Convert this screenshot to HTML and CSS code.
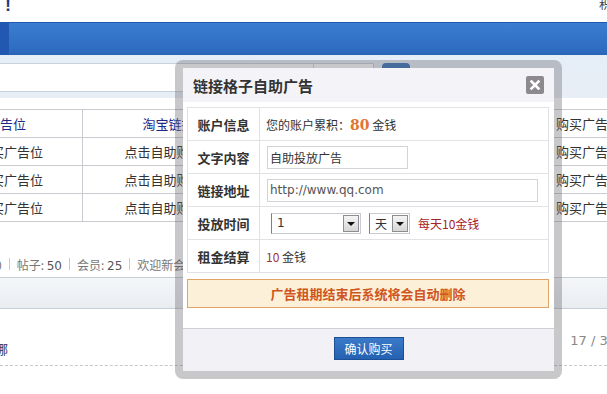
FILE: index.html
```html
<!DOCTYPE html>
<html lang="zh-CN">
<head>
  <meta charset="UTF-8">
  <title>链接格子自助广告</title>
  <link rel="stylesheet" href="styles.css">
</head>
<body>
  <div class="topbar">
    <span class="logo">!</span>
    <span class="top-link">积分</span>
  </div>
  <div class="nav"><div class="nav-home"></div></div>

  <div class="search-wrap">
    <div class="search-box">
      <div class="search-input"></div>
      <div class="search-type"></div>
    </div>
    <div class="search-btn"></div>
  </div>

  <table class="ad-table">
    <tr class="ad-head">
      <td class="c1"><a href="#">告位</a></td>
      <td class="c2"><a href="#">淘宝链接</a></td>
      <td class="c3"></td>
      <td class="c4">购买广告位</td>
    </tr>
    <tr>
      <td class="c1">购买广告位</td>
      <td class="c2">点击自助购买</td>
      <td class="c3"></td>
      <td class="c4">购买广告位</td>
    </tr>
    <tr>
      <td class="c1">购买广告位</td>
      <td class="c2">点击自助购买</td>
      <td class="c3"></td>
      <td class="c4">购买广告位</td>
    </tr>
    <tr>
      <td class="c1">购买广告位</td>
      <td class="c2">点击自助购买</td>
      <td class="c3"></td>
      <td class="c4">购买广告位</td>
    </tr>
  </table>

  <div class="stats">
    <span>0</span><i class="sep"></i>
    <span>帖子: <em>50</em></span><i class="sep"></i>
    <span>会员: <em>25</em></span><i class="sep"></i>
    <span>欢迎新会员</span>
  </div>

  <div class="grey-band"></div>

  <div class="thread-row">
    <a href="#" class="thread-link">哪</a>
    <span class="pages">17 / 33</span>
  </div>

  <!-- 自助广告弹窗 -->
  <div class="dialog">
    <div class="dialog-inner">
      <div class="dialog-title">
        <h3>链接格子自助广告</h3>
        <span class="close">
          <svg width="18" height="18" viewBox="0 0 18 18">
            <path d="M5.5 5.5 L12.5 12.5 M12.5 5.5 L5.5 12.5" stroke="#fff" stroke-width="2.6" stroke-linecap="square"/>
          </svg>
        </span>
      </div>

      <div class="dialog-body">
        <table class="form-table">
          <tr>
            <th>账户信息</th>
            <td class="pad6">您的账户累积：<b class="money">80</b> 金钱</td>
          </tr>
          <tr>
            <th>文字内容</th>
            <td><input type="text" class="text-short" value="自助投放广告"></td>
          </tr>
          <tr>
            <th>链接地址</th>
            <td><input type="text" class="text-long" value="http://www.qq.com"></td>
          </tr>
          <tr>
            <th>投放时间</th>
            <td>
              <div class="time-row">
                <div class="fake-select s-num">1<span class="arrow"></span></div>
                <div class="fake-select s-unit">天<span class="arrow"></span></div>
                <span class="rate">每天10金钱</span>
              </div>
            </td>
          </tr>
          <tr>
            <th>租金结算</th>
            <td class="pad6"><span class="price">10</span> 金钱</td>
          </tr>
        </table>
        <div class="notice">广告租期结束后系统将会自动删除</div>
      </div>

      <div class="dialog-foot">
        <button type="button" class="confirm">确认购买</button>
      </div>
    </div>
  </div>
</body>
</html>
```

FILE: styles.css
```css
html, body {
  margin: 0;
  width: 607px;
  height: 394px;
  overflow: hidden;
}

body {
  position: relative;
  background: #fff;
  font-family: "Noto Sans CJK SC", sans-serif;
  font-size: 12px;
  color: #333;
}

a {
  text-decoration: none;
}

/* top */
.topbar {
  height: 22px;
  display: flex;
  justify-content: space-between;
  align-items: flex-start;
}

.logo {
  margin: -4px 0 0 5px;
  font-family: "Liberation Sans", sans-serif;
  font-size: 18px;
  font-weight: bold;
  line-height: 18px;
  color: #1b3d86;
}

.top-link {
  margin: -3px -16px 0 0;
  font-size: 12px;
  line-height: 14px;
  color: #444;
}

.nav {
  height: 32px;
  border-top: 1px solid #2059a8;
  background: linear-gradient(#3b7dd0, #2e6cc1 85%, #2a63b3);
}

.nav-home {
  width: 9px;
  height: 100%;
  background: #2257b2;
}

.search-wrap {
  display: flex;
  align-items: flex-start;
  gap: 8px;
  height: 43px;
  padding-top: 8px;
  background: linear-gradient(#e5eef8, #e8eef5);
  box-sizing: border-box;
}

.search-box {
  display: flex;
  height: 29px;
  margin-left: -2px;
  background: #fff;
  border: 1px solid #c8d1db;
  box-sizing: border-box;
}

.search-input {
  width: 314px;
  border-right: 1px solid #d3d9e0;
}

.search-type {
  width: 59px;
}

.search-btn {
  width: 28px;
  height: 26px;
  border-radius: 4px;
  background: linear-gradient(#3a77bd, #2a62a8);
}

/* background table */
.ad-table {
  margin: 11px 0 0 -22px;
  border-collapse: collapse;
  table-layout: fixed;
  width: 692px;
  font-size: 13px;
}

.ad-table td {
  height: 28px;
  padding: 0;
  border-top: 1px solid #c9c9cf;
  border-bottom: 1px solid #c9c9cf;
  white-space: nowrap;
  overflow: hidden;
  color: #333;
  box-sizing: border-box;
}

.ad-table .c1 { width: 104px; border-right: 1px solid #c9c9cf; }
.ad-table .c2 { width: 178px; padding-left: 42px; }
.ad-table .c3 { width: 286px; }
.ad-table .c4 { width: 124px; padding-left: 10px; }

.ad-head .c1 { padding-left: 22px; }
.ad-head .c2 { padding-left: 60px; }

.ad-head a {
  color: #1f2a85;
}

.stats {
  display: flex;
  align-items: center;
  height: 18px;
  margin: 33px 0 0 -5px;
  color: #777;
  font-size: 12px;
}

.stats em {
  font-style: normal;
  font-family: "DejaVu Sans", sans-serif;
  color: #555;
}

.sep {
  width: 1px;
  height: 12px;
  margin: 0 7px;
  background: #ccc;
}

.grey-band {
  height: 30px;
  margin-top: 4px;
  border-top: 1px solid #c7cdd5;
  border-bottom: 1px solid #c7cdd5;
  background: linear-gradient(#f4f6f9, #e9edf2);
}

.thread-row {
  display: flex;
  justify-content: space-between;
  height: 56px;
  border-bottom: 1px dashed #c8c8c8;
}

.thread-link {
  margin: 30px 0 0 -5px;
  font-size: 13px;
  color: #2b3b66;
}

.pages {
  margin: 24px -9px 0 0;
  font-family: "DejaVu Sans", sans-serif;
  font-size: 13px;
  color: #888;
}

/* dialog */
.dialog {
  position: absolute;
  left: 175px;
  top: 60px;
  width: 387px;
  padding: 8px;
  border-radius: 8px;
  background: rgba(95, 90, 100, 0.34);
  box-sizing: border-box;
}

.dialog-inner {
  background: #fff;
}

.dialog-title {
  display: flex;
  justify-content: space-between;
  align-items: center;
  height: 34px;
  padding: 0 10px;
  background: #f4f3f7;
}

.dialog-title h3 {
  margin: 0;
  font-size: 15px;
  font-weight: bold;
  color: #333;
}

.close {
  display: flex;
  width: 18px;
  height: 18px;
  border-radius: 2px;
  background: #8c8a8f;
}

.dialog-body {
  height: 226px;
  padding: 5px 5px 0 4px;
  box-sizing: border-box;
}

.form-table {
  width: 100%;
  border-collapse: collapse;
  font-size: 12px;
}

.form-table th,
.form-table td {
  height: 32px;
  padding: 0;
  border: 1px solid #e2e2e6;
}

.form-table th {
  width: 71px;
  font-size: 13px;
  font-weight: bold;
  color: #333;
}

.form-table td {
  padding-left: 7px;
}

.form-table td.pad6 {
  padding-left: 6px;
}

.money {
  font-family: "DejaVu Serif", serif;
  font-size: 14px;
  color: #e07532;
}

.form-table input {
  height: 23px;
  padding: 0 2px;
  border: 1px solid #d4d4d8;
  font-family: "Noto Sans CJK SC", sans-serif;
  font-size: 12px;
  color: #333;
  box-sizing: border-box;
  outline: none;
}

.text-short {
  width: 141px;
}

.text-long {
  width: 271px;
  font-family: "DejaVu Sans", sans-serif !important;
  color: #555 !important;
}

.time-row {
  display: flex;
  align-items: center;
  margin-left: 4px;
}

.fake-select {
  display: flex;
  justify-content: space-between;
  align-items: center;
  height: 21px;
  padding-left: 5px;
  border: 1px solid #c6cbd1;
  border-left-color: #7f7f7f;
  font-family: "DejaVu Sans", sans-serif;
  font-size: 12px;
  color: #333;
  box-sizing: border-box;
}

.s-num {
  width: 90px;
}

.s-unit {
  width: 41px;
  margin-left: 8px;
  font-family: "Noto Sans CJK SC", sans-serif;
}

.arrow {
  position: relative;
  width: 16px;
  height: 17px;
  margin-right: 1px;
  border: 1px solid #8e8e8e;
  background: linear-gradient(#f5f5f5, #d6d6d6);
  box-sizing: border-box;
}

.arrow::after {
  content: "";
  position: absolute;
  left: 3px;
  top: 6px;
  border-left: 4px solid transparent;
  border-right: 4px solid transparent;
  border-top: 4px solid #111;
}

.rate {
  margin-left: 8px;
  color: #a8222c;
}

.price {
  color: #a3343a;
}

.notice {
  height: 29px;
  margin-top: 6px;
  border: 1px solid #e1a466;
  background: #fdf0d9;
  text-align: center;
  line-height: 27px;
  font-size: 13px;
  font-weight: bold;
  color: #cf5620;
  box-sizing: border-box;
}

.dialog-foot {
  height: 43px;
  padding-top: 8px;
  border-top: 1px solid #cfcfd7;
  background: #f2f1f5;
  text-align: center;
  box-sizing: border-box;
}

.confirm {
  width: 70px;
  height: 23px;
  padding: 0;
  border: 1px solid #1d4f96;
  background: linear-gradient(#3b79c9, #2461b1);
  color: #fff;
  font-family: "Noto Sans CJK SC", sans-serif;
  font-size: 12px;
}
```
